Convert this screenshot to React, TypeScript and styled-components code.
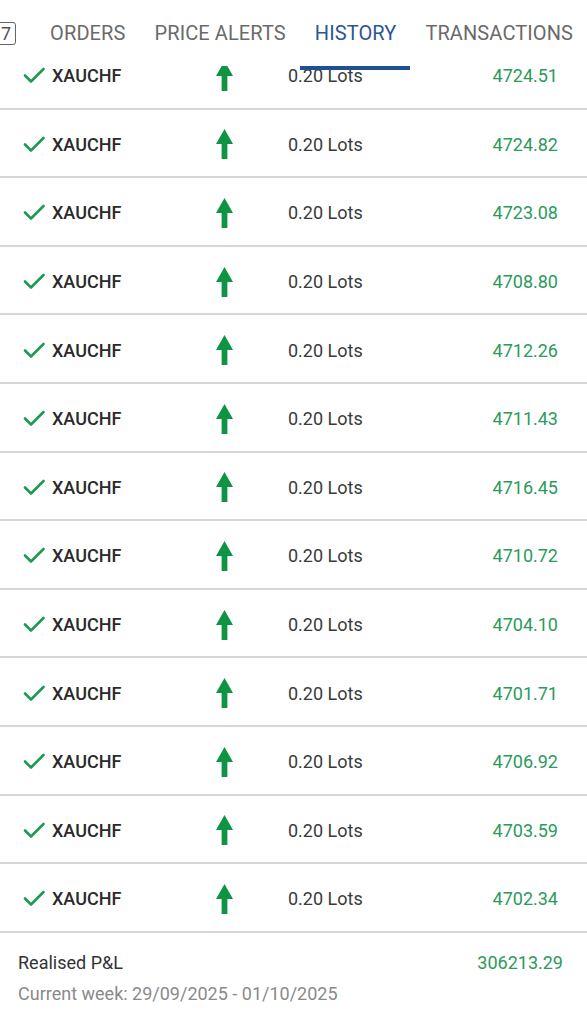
import { useLayoutEffect, useRef } from 'react';
import styled, { createGlobalStyle } from 'styled-components';

const GlobalStyle = createGlobalStyle`
  html, body {
    margin: 0;
    padding: 0;
    background: #fff;
  }
  * {
    box-sizing: border-box;
  }
`;

const Screen = styled.div`
  height: 100vh;
  width: 100vw;
  display: flex;
  flex-direction: column;
  overflow: hidden;
  font-family: Roboto, 'Liberation Sans', sans-serif;
  background: #fff;
`;

const TabBar = styled.nav`
  flex: none;
  height: 66px;
  display: flex;
  justify-content: flex-end;
  align-items: stretch;
  background: #fff;
  position: relative;
  z-index: 2;
`;

const Tab = styled.div<{ $active?: boolean }>`
  flex: none;
  position: relative;
  display: flex;
  align-items: center;
  gap: 8px;
  padding: 0 14px 0 15px;
  font-size: 20px;
  letter-spacing: 0.1px;
  color: ${(p) => (p.$active ? '#2a5696' : '#6a6a6a')};
  white-space: nowrap;
`;

const Underline = styled.span`
  position: absolute;
  left: 0;
  right: 0;
  bottom: -4px;
  height: 4px;
  background: #1f4f94;
`;

const CountBadge = styled.span`
  display: inline-flex;
  align-items: center;
  justify-content: center;
  min-width: 20px;
  height: 23px;
  padding: 0 3px;
  margin-right: 5px;
  border: 1.5px solid #666;
  border-radius: 3px;
  font-size: 18px;
  color: #555;
`;

const Scroller = styled.div`
  flex: 1;
  overflow: hidden;
`;

const Row = styled.div`
  height: 68.6px;
  display: grid;
  grid-template-columns: 29px 164px 72px 1fr auto;
  align-items: center;
  padding: 3px 29px 0 23px;
  border-bottom: 2px solid #d6d6d6;
  font-size: 18px;
`;

const Symbol = styled.span`
  font-weight: 500;
  color: #2a2a2a;
`;

const Lots = styled.span`
  color: #3a3a3a;
`;

const Price = styled.span`
  color: #2b9a5c;
  text-align: right;
`;

const IconCell = styled.span`
  display: flex;
  align-items: center;
`;

const Footer = styled.div`
  padding: 18px 24px 20px 18px;
  display: flex;
  flex-direction: column;
  gap: 7px;
  font-size: 18px;
  line-height: 24px;
  border-bottom: 2px solid #ececec;
`;

const FooterLine = styled.div`
  display: flex;
  justify-content: space-between;
`;

const FooterLabel = styled.span`
  color: #333;
`;

const FooterValue = styled.span`
  color: #2b9a5c;
`;

const WeekText = styled.span`
  color: #8a8a8a;
`;

const CheckIcon = () => (
  <svg width="22" height="17" viewBox="0 0 22 17" fill="none">
    <polyline
      points="2,8.5 8,14.5 20.5,2"
      stroke="#1f9a55"
      strokeWidth="2.6"
      strokeLinecap="round"
      strokeLinejoin="round"
    />
  </svg>
);

const UpArrow = () => (
  <svg width="17" height="30" viewBox="0 0 17 30">
    <path d="M8.5 0 L17 15 H11.4 V30 H5.6 V15 H0 Z" fill="#0f9444" />
  </svg>
);

const trades = [
  '4724.51',
  '4724.82',
  '4723.08',
  '4708.80',
  '4712.26',
  '4711.43',
  '4716.45',
  '4710.72',
  '4704.10',
  '4701.71',
  '4706.92',
  '4703.59',
  '4702.34',
];

export default function App() {
  const listRef = useRef<HTMLDivElement>(null);

  useLayoutEffect(() => {
    // list is scrolled a little, first row sits under the tabs
    if (listRef.current) listRef.current.scrollTop = 25;
  }, []);

  return (
    <Screen>
      <GlobalStyle />
      <TabBar>
        <Tab>
          POSITIONS <CountBadge>7</CountBadge>
        </Tab>
        <Tab>ORDERS</Tab>
        <Tab>PRICE ALERTS</Tab>
        <Tab $active>
          HISTORY
          <Underline />
        </Tab>
        <Tab>TRANSACTIONS</Tab>
      </TabBar>

      <Scroller ref={listRef}>
        {trades.map((price, idx) => (
          <Row key={idx}>
            <IconCell>
              <CheckIcon />
            </IconCell>
            <Symbol>XAUCHF</Symbol>
            <IconCell>
              <UpArrow />
            </IconCell>
            <Lots>0.20 Lots</Lots>
            <Price>{price}</Price>
          </Row>
        ))}
        <Footer>
          <FooterLine>
            <FooterLabel>Realised P&amp;L</FooterLabel>
            <FooterValue>306213.29</FooterValue>
          </FooterLine>
          <WeekText>Current week: 29/09/2025 - 01/10/2025</WeekText>
        </Footer>
      </Scroller>
    </Screen>
  );
}
